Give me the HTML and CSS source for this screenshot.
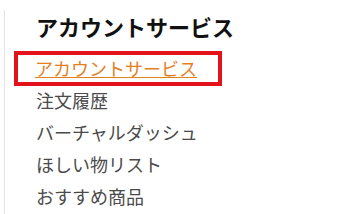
FILE: index.html
```html
<!DOCTYPE html>
<html lang="ja">
<head>
    <meta charset="UTF-8">
    <title>アカウントサービス</title>
    <link rel="stylesheet" href="styles.css">
</head>
<body>
    <div class="side-nav">
        <h2 class="nav-title">アカウントサービス</h2>
        <ul class="nav-list">
            <li class="current"><a href="#">アカウントサービス</a></li>
            <li>注文履歴</li>
            <li>バーチャルダッシュ</li>
            <li>ほしい物リスト</li>
            <li>おすすめ商品</li>
        </ul>
    </div>
</body>
</html>
```

FILE: styles.css
```css
body {
    margin: 0;
    background: #fff;
    font-family: "Noto Sans CJK JP", "Noto Sans", sans-serif;
}
.side-nav {
    margin: 10px 0 0 4px;
    padding-left: 31px;
    border-left: 1px solid #e4e4e4;
    height: 204px;
}
.nav-title {
    margin: 0 0 9px;
    font-size: 22px;
    line-height: 32px;
    font-weight: bold;
    color: #111;
}
.nav-list {
    list-style: none;
    margin: 0;
    padding: 0;
}
.nav-list li {
    font-size: 18px;
    line-height: 32px;
    color: #4a4a4a;
}
.nav-list .current {
    box-sizing: border-box;
    width: 208px;
    height: 35px;
    margin: 0 0 -2px -22px;
    padding-left: 17px;
    border: 4px solid #e3121b;
    line-height: 27px;
}
.current a {
    color: #e4801f;
    text-decoration: underline;
}
```
